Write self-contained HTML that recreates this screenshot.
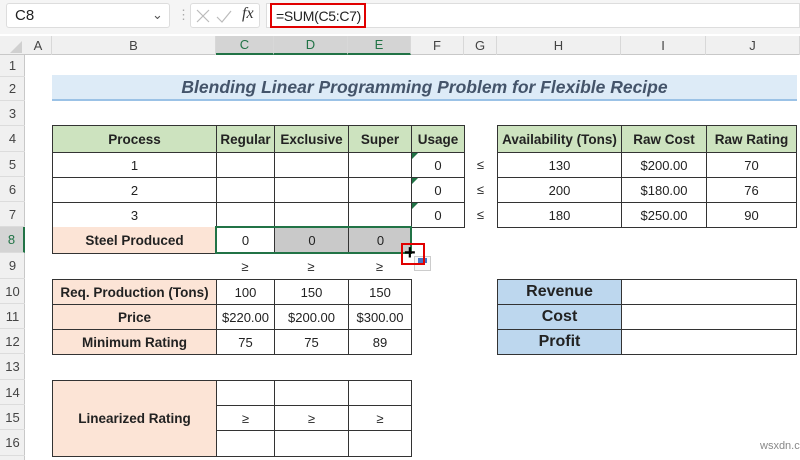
<!DOCTYPE html>
<html><head><meta charset="utf-8"><style>
*{box-sizing:border-box;margin:0;padding:0}
body{width:800px;height:460px;overflow:hidden;background:#fff;font-family:"Liberation Sans",sans-serif;position:relative}
.a{position:absolute}
.c{position:absolute;display:flex;align-items:center;justify-content:center;font-size:13px;color:#222;border:1px solid #333;background:#fff}
.b{font-weight:bold;font-size:13.5px}
.g{background:#cde3bf}
.p{background:#fce4d6}
.bl{background:#bdd7ee;font-size:16px}
.ch{position:absolute;top:36px;height:19px;font-size:13px;color:#444;display:flex;align-items:center;justify-content:center;border-right:1px solid #d8d8d8}
.rh{position:absolute;left:0;width:25px;font-size:13px;color:#444;display:flex;align-items:center;justify-content:center;border-bottom:1px solid #dcdcdc}
.sy{position:absolute;font-size:13px;color:#222;text-align:center}
</style></head><body>
<div class="a" style="left:0;top:0;width:800px;height:34px;background:#f5f5f5"></div>
<div class="a" style="left:6px;top:3px;width:164px;height:25px;background:#fff;border:1px solid #ddd;border-radius:3px;font-size:15px;color:#222;padding:3px 0 0 8px">C8</div>
<div class="a" style="left:152px;top:7px;font-size:13px;color:#555">⌄</div>
<div class="a" style="left:177px;top:7px;font-size:13px;color:#aaa">⋮</div>
<div class="a" style="left:190px;top:3px;width:70px;height:25px;background:#fff;border:1px solid #ddd;border-radius:3px"></div>
<svg class="a" style="left:195px;top:8px" width="60" height="16"><path d="M2 2L14 14M14 2L2 14" stroke="#bbb" stroke-width="1.2" fill="none"/><path d="M22 9L27 14L36 3" stroke="#bbb" stroke-width="1.2" fill="none"/></svg>
<div class="a" style="left:242px;top:5px;font-family:'Liberation Serif',serif;font-style:italic;font-size:16px;color:#333">fx</div>
<div class="a" style="left:266px;top:3px;width:534px;height:25px;background:#fff;border:1px solid #ddd"></div>
<div class="a" style="left:270px;top:3px;width:96px;height:25px;border:2px solid #e00000;font-size:14px;letter-spacing:-0.3px;color:#222;padding:3px 0 0 4px;white-space:nowrap">=SUM(C5:C7)</div>
<div class="a" style="left:0;top:36px;width:800px;height:19px;background:#f0f0f0;border-bottom:1px solid #c8c8c8"></div>
<svg class="a" style="left:10px;top:41px" width="12" height="12"><path d="M12 0L12 12L0 12Z" fill="#d0d0d0"/></svg>
<div class="ch" style="left:25px;width:27px">A</div>
<div class="ch" style="left:52px;width:164px">B</div>
<div class="ch" style="left:216px;width:58px;background:#d4d4d4;color:#217346;border-bottom:2px solid #217346">C</div>
<div class="ch" style="left:274px;width:74px;background:#d4d4d4;color:#217346;border-bottom:2px solid #217346">D</div>
<div class="ch" style="left:348px;width:63px;background:#d4d4d4;color:#217346;border-bottom:2px solid #217346">E</div>
<div class="ch" style="left:411px;width:53px">F</div>
<div class="ch" style="left:464px;width:33px">G</div>
<div class="ch" style="left:497px;width:124px">H</div>
<div class="ch" style="left:621px;width:85px">I</div>
<div class="ch" style="left:706px;width:94px">J</div>
<div class="a" style="left:0;top:55px;width:25px;height:405px;background:#f0f0f0;border-right:1px solid #c8c8c8"></div>
<div class="rh" style="top:55px;height:22px">1</div>
<div class="rh" style="top:77px;height:24px">2</div>
<div class="rh" style="top:101px;height:25px">3</div>
<div class="rh" style="top:126px;height:26px">4</div>
<div class="rh" style="top:152px;height:25px">5</div>
<div class="rh" style="top:177px;height:25px">6</div>
<div class="rh" style="top:202px;height:25px">7</div>
<div class="rh" style="top:227px;height:26px;background:#d4d4d4;color:#217346;border-right:2px solid #217346">8</div>
<div class="rh" style="top:253px;height:26px">9</div>
<div class="rh" style="top:279px;height:25px">10</div>
<div class="rh" style="top:304px;height:25px">11</div>
<div class="rh" style="top:329px;height:25px">12</div>
<div class="rh" style="top:354px;height:26px">13</div>
<div class="rh" style="top:380px;height:25px">14</div>
<div class="rh" style="top:405px;height:25px">15</div>
<div class="rh" style="top:430px;height:26px">16</div>
<div class="a" style="left:52px;top:75px;width:745px;height:26px;background:#ddebf7;border-bottom:2px solid #9bc2e6;font-weight:bold;font-style:italic;font-size:17.5px;color:#44546a;text-align:center;line-height:25px">Blending Linear Programming Problem for Flexible Recipe</div>
<div class="c b g" style="left:52px;top:125px;width:165px;height:28px">Process</div>
<div class="c b g" style="left:216px;top:125px;width:59px;height:28px">Regular</div>
<div class="c b g" style="left:274px;top:125px;width:75px;height:28px">Exclusive</div>
<div class="c b g" style="left:348px;top:125px;width:64px;height:28px">Super</div>
<div class="c b g" style="left:411px;top:125px;width:54px;height:28px">Usage</div>
<div class="c" style="left:52px;top:152px;width:165px;height:26px">1</div>
<div class="c" style="left:216px;top:152px;width:59px;height:26px"></div>
<div class="c" style="left:274px;top:152px;width:75px;height:26px"></div>
<div class="c" style="left:348px;top:152px;width:64px;height:26px"></div>
<div class="c" style="left:411px;top:152px;width:54px;height:26px">0</div>
<div class="c" style="left:52px;top:177px;width:165px;height:26px">2</div>
<div class="c" style="left:216px;top:177px;width:59px;height:26px"></div>
<div class="c" style="left:274px;top:177px;width:75px;height:26px"></div>
<div class="c" style="left:348px;top:177px;width:64px;height:26px"></div>
<div class="c" style="left:411px;top:177px;width:54px;height:26px">0</div>
<div class="c" style="left:52px;top:202px;width:165px;height:26px">3</div>
<div class="c" style="left:216px;top:202px;width:59px;height:26px"></div>
<div class="c" style="left:274px;top:202px;width:75px;height:26px"></div>
<div class="c" style="left:348px;top:202px;width:64px;height:26px"></div>
<div class="c" style="left:411px;top:202px;width:54px;height:26px">0</div>
<svg class="a" style="left:412px;top:153px" width="6" height="60"><path d="M0 0H6L0 6Z M0 25H6L0 31Z M0 50H6L0 56Z" fill="#217346"/></svg>
<div class="c b p" style="left:52px;top:227px;width:165px;height:27px;border-top:none">Steel Produced</div>
<div class="c" style="left:216px;top:227px;width:59px;height:26px;border:none">0</div>
<div class="c" style="left:274px;top:227px;width:75px;height:26px;border:none;border-left:1px solid #333;background:#c9c9c9">0</div>
<div class="c" style="left:348px;top:227px;width:64px;height:26px;border:none;border-left:1px solid #333;background:#c9c9c9">0</div>
<div class="a" style="left:215px;top:226px;width:197px;height:28px;border:2px solid #217346"></div>
<div class="sy" style="left:216px;top:259px;width:58px">≥</div>
<div class="sy" style="left:274px;top:259px;width:74px">≥</div>
<div class="sy" style="left:348px;top:259px;width:63px">≥</div>
<div class="sy" style="left:464px;top:157px;width:33px">≤</div>
<div class="sy" style="left:464px;top:182px;width:33px">≤</div>
<div class="sy" style="left:464px;top:207px;width:33px">≤</div>
<div class="a" style="left:414px;top:256px;width:17px;height:15px;border:1px solid #ccc;background:#f8f8f8"></div>
<div class="a" style="left:418px;top:258px;width:9px;height:5px;background:#4472c4"></div>
<div class="a" style="left:401px;top:243px;width:24px;height:22px;border:2.5px solid #e00000"></div>
<div class="a" style="left:404px;top:242px;font-size:20px;font-weight:bold;color:#000">+</div>
<div class="c b g" style="left:497px;top:125px;width:125px;height:28px">Availability (Tons)</div>
<div class="c b g" style="left:621px;top:125px;width:86px;height:28px">Raw Cost</div>
<div class="c b g" style="left:706px;top:125px;width:91px;height:28px">Raw Rating</div>
<div class="c" style="left:497px;top:152px;width:125px;height:26px">130</div>
<div class="c" style="left:621px;top:152px;width:86px;height:26px">$200.00</div>
<div class="c" style="left:706px;top:152px;width:91px;height:26px">70</div>
<div class="c" style="left:497px;top:177px;width:125px;height:26px">200</div>
<div class="c" style="left:621px;top:177px;width:86px;height:26px">$180.00</div>
<div class="c" style="left:706px;top:177px;width:91px;height:26px">76</div>
<div class="c" style="left:497px;top:202px;width:125px;height:26px">180</div>
<div class="c" style="left:621px;top:202px;width:86px;height:26px">$250.00</div>
<div class="c" style="left:706px;top:202px;width:91px;height:26px">90</div>
<div class="c b p" style="left:52px;top:279px;width:165px;height:26px">Req. Production (Tons)</div>
<div class="c" style="left:216px;top:279px;width:59px;height:26px">100</div>
<div class="c" style="left:274px;top:279px;width:75px;height:26px">150</div>
<div class="c" style="left:348px;top:279px;width:64px;height:26px">150</div>
<div class="c b p" style="left:52px;top:304px;width:165px;height:26px">Price</div>
<div class="c" style="left:216px;top:304px;width:59px;height:26px">$220.00</div>
<div class="c" style="left:274px;top:304px;width:75px;height:26px">$200.00</div>
<div class="c" style="left:348px;top:304px;width:64px;height:26px">$300.00</div>
<div class="c b p" style="left:52px;top:329px;width:165px;height:26px">Minimum Rating</div>
<div class="c" style="left:216px;top:329px;width:59px;height:26px">75</div>
<div class="c" style="left:274px;top:329px;width:75px;height:26px">75</div>
<div class="c" style="left:348px;top:329px;width:64px;height:26px">89</div>
<div class="c b p" style="left:52px;top:380px;width:165px;height:77px">Linearized Rating</div>
<div class="c" style="left:216px;top:380px;width:59px;height:26px"></div>
<div class="c" style="left:274px;top:380px;width:75px;height:26px"></div>
<div class="c" style="left:348px;top:380px;width:64px;height:26px"></div>
<div class="c" style="left:216px;top:405px;width:59px;height:26px">≥</div>
<div class="c" style="left:274px;top:405px;width:75px;height:26px">≥</div>
<div class="c" style="left:348px;top:405px;width:64px;height:26px">≥</div>
<div class="c" style="left:216px;top:430px;width:59px;height:27px"></div>
<div class="c" style="left:274px;top:430px;width:75px;height:27px"></div>
<div class="c" style="left:348px;top:430px;width:64px;height:27px"></div>
<div class="c b bl" style="left:497px;top:279px;width:125px;height:26px">Revenue</div>
<div class="c" style="left:621px;top:279px;width:176px;height:26px"></div>
<div class="c b bl" style="left:497px;top:304px;width:125px;height:26px">Cost</div>
<div class="c" style="left:621px;top:304px;width:176px;height:26px"></div>
<div class="c b bl" style="left:497px;top:329px;width:125px;height:26px">Profit</div>
<div class="c" style="left:621px;top:329px;width:176px;height:26px"></div>
<div class="a" style="left:760px;top:440px;font-size:11px;color:#888">wsxdn.com</div>
</body></html>
